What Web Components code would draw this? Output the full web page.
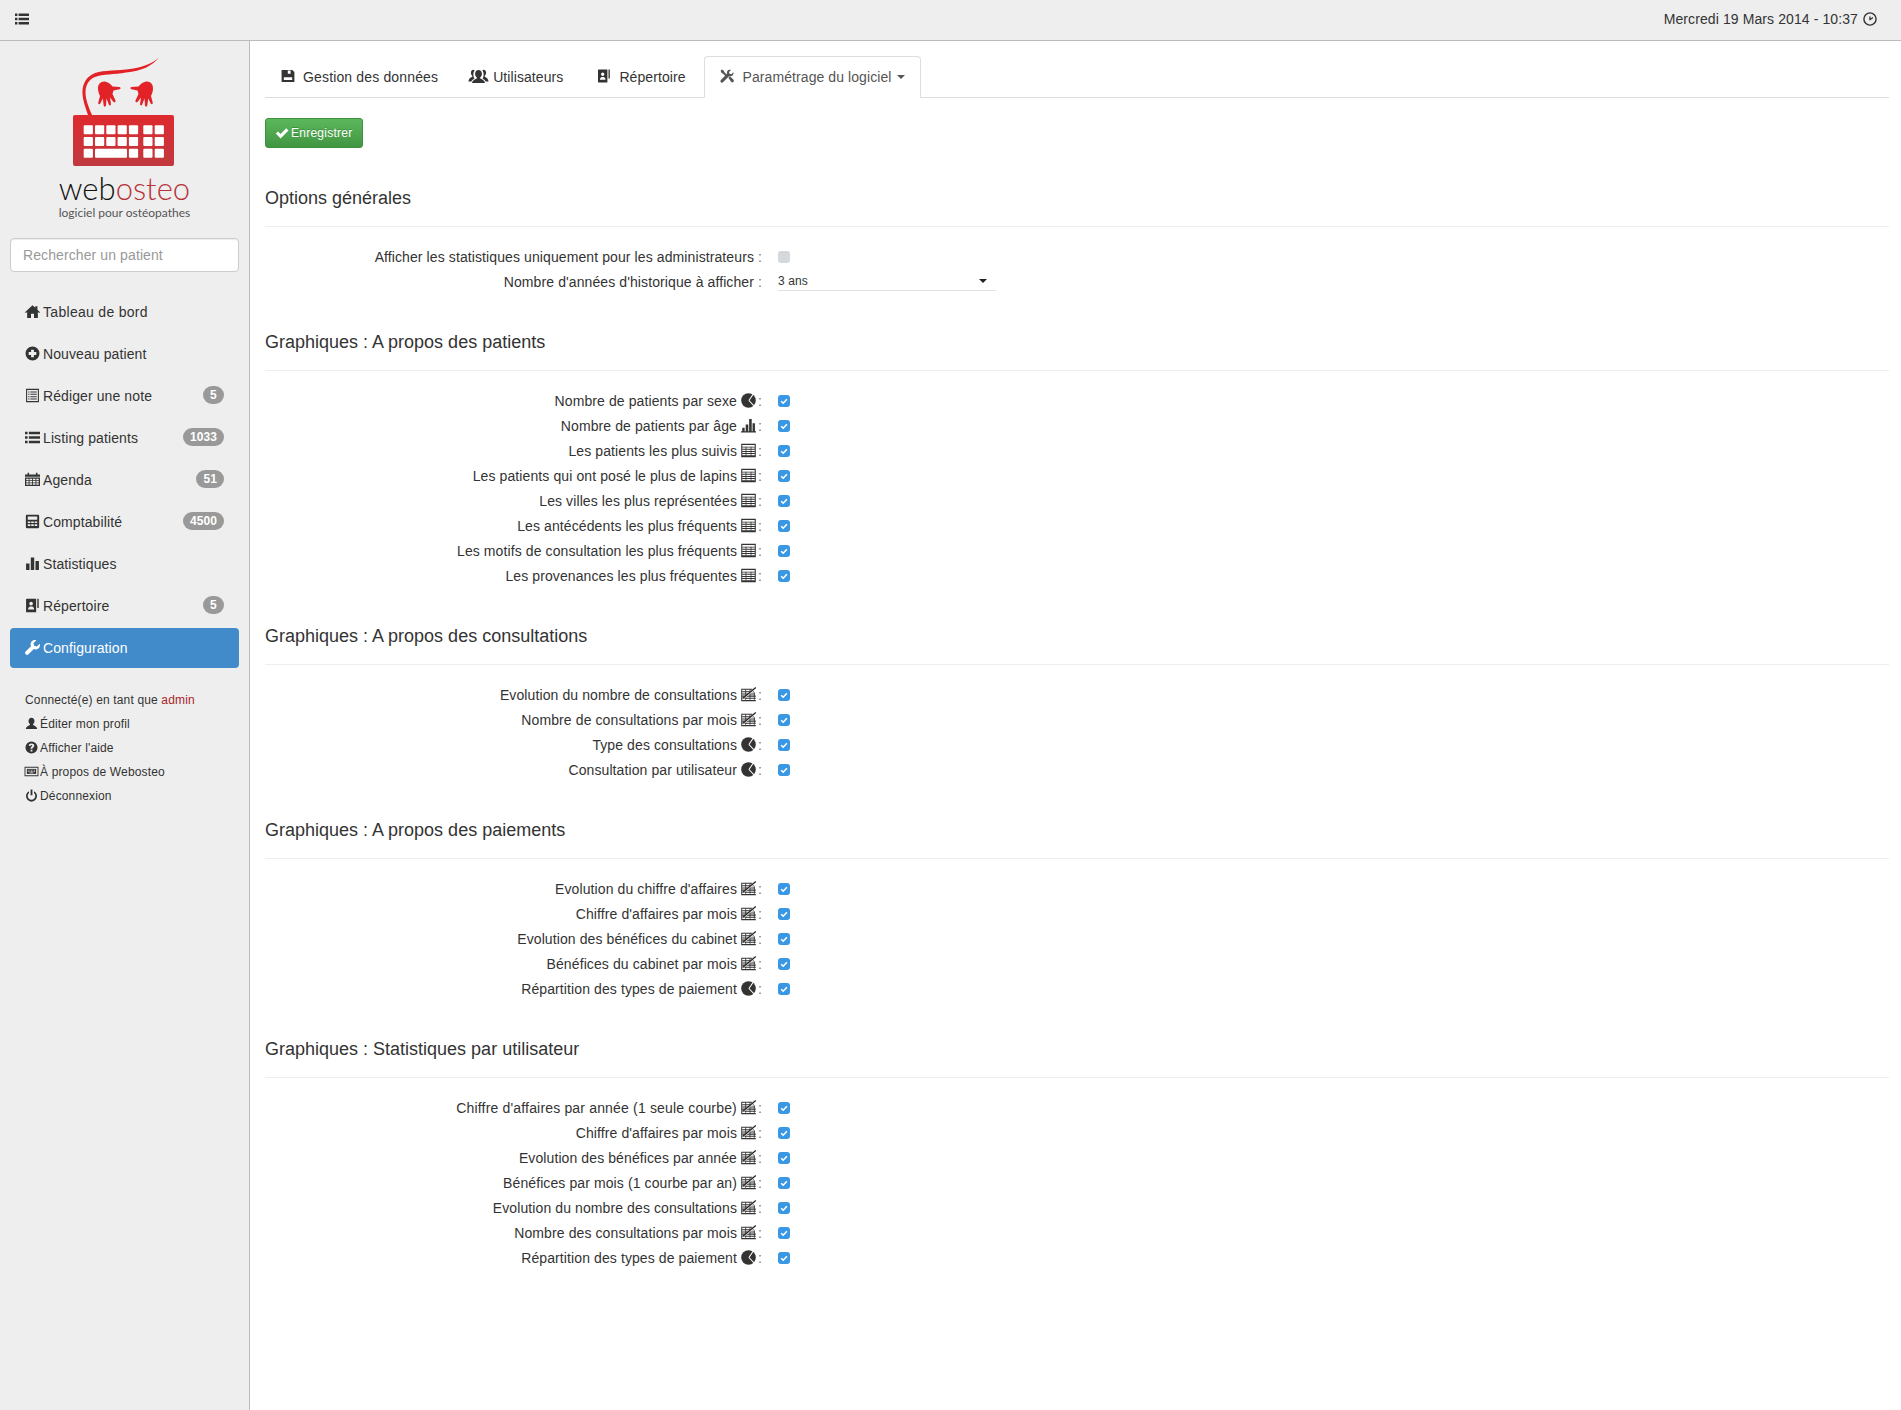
<!DOCTYPE html>
<html lang="fr">
<head>
<meta charset="utf-8">
<title>Webosteo - Configuration</title>
<style>
    html, body { margin: 0; padding: 0; height: 100%; background: #fff; }
    body { font-family: "Liberation Sans", Arial, sans-serif; font-size: 14px; color: #333; }
</style>
</head>
<body>

<wo-app>
    <wo-topbar slot="top">Mercredi 19 Mars 2014 - 10:37</wo-topbar>

    <wo-sidebar slot="side">
        <wo-nav-item icon="home" style="letter-spacing:.3px">Tableau de bord</wo-nav-item>
        <wo-nav-item icon="plus">Nouveau patient</wo-nav-item>
        <wo-nav-item icon="note" badge="5">Rédiger une note</wo-nav-item>
        <wo-nav-item icon="list" badge="1033">Listing patients</wo-nav-item>
        <wo-nav-item icon="calendar" badge="51">Agenda</wo-nav-item>
        <wo-nav-item icon="calc" badge="4500">Comptabilité</wo-nav-item>
        <wo-nav-item icon="stats">Statistiques</wo-nav-item>
        <wo-nav-item icon="book" badge="5">Répertoire</wo-nav-item>
        <wo-nav-item icon="wrench" active>Configuration</wo-nav-item>
        <wo-user-menu slot="user"></wo-user-menu>
    </wo-sidebar>

    <wo-tabs>
        <wo-tab icon="save" gap="8" style="letter-spacing:.15px">Gestion des données</wo-tab>
        <wo-tab icon="group" size="19" gap="5" pull="3">Utilisateurs</wo-tab>
        <wo-tab icon="book" gap="8">Répertoire</wo-tab>
        <wo-tab icon="tools" active caret>Paramétrage du logiciel</wo-tab>
    </wo-tabs>

    <wo-button icon="check">Enregistrer</wo-button>

    <wo-section heading="Options générales" first>
        <wo-option>Afficher les statistiques uniquement pour les administrateurs</wo-option>
        <wo-option select="3 ans">Nombre d'années d'historique à afficher</wo-option>
    </wo-section>

    <wo-section heading="Graphiques : A propos des patients">
        <wo-option icon="pie" checked>Nombre de patients par sexe</wo-option>
        <wo-option icon="bars" checked>Nombre de patients par âge</wo-option>
        <wo-option icon="table" checked>Les patients les plus suivis</wo-option>
        <wo-option icon="table" checked>Les patients qui ont posé le plus de lapins</wo-option>
        <wo-option icon="table" checked>Les villes les plus représentées</wo-option>
        <wo-option icon="table" checked>Les antécédents les plus fréquents</wo-option>
        <wo-option icon="table" checked>Les motifs de consultation les plus fréquents</wo-option>
        <wo-option icon="table" checked>Les provenances les plus fréquentes</wo-option>
    </wo-section>

    <wo-section heading="Graphiques : A propos des consultations">
        <wo-option icon="line" checked>Evolution du nombre de consultations</wo-option>
        <wo-option icon="line" checked>Nombre de consultations par mois</wo-option>
        <wo-option icon="pie" checked>Type des consultations</wo-option>
        <wo-option icon="pie" checked>Consultation par utilisateur</wo-option>
    </wo-section>

    <wo-section heading="Graphiques : A propos des paiements">
        <wo-option icon="line" checked>Evolution du chiffre d'affaires</wo-option>
        <wo-option icon="line" checked>Chiffre d'affaires par mois</wo-option>
        <wo-option icon="line" checked>Evolution des bénéfices du cabinet</wo-option>
        <wo-option icon="line" checked>Bénéfices du cabinet par mois</wo-option>
        <wo-option icon="pie" checked>Répartition des types de paiement</wo-option>
    </wo-section>

    <wo-section heading="Graphiques : Statistiques par utilisateur">
        <wo-option icon="line" checked style="letter-spacing:.17px">Chiffre d'affaires par année (1 seule courbe)</wo-option>
        <wo-option icon="line" checked>Chiffre d'affaires par mois</wo-option>
        <wo-option icon="line" checked>Evolution des bénéfices par année</wo-option>
        <wo-option icon="line" checked>Bénéfices par mois (1 courbe par an)</wo-option>
        <wo-option icon="line" checked>Evolution du nombre des consultations</wo-option>
        <wo-option icon="line" checked>Nombre des consultations par mois</wo-option>
        <wo-option icon="pie" checked>Répartition des types de paiement</wo-option>
    </wo-section>
</wo-app>

<script>
// Glyph set, all on a 14x14 grid
const ICONS = {
    home: '<path d="M7 1.2 0 7.6l.8.9L2 7.500V13h3.600V9h2.800v4H12V7.500l1.200 1 .8-.9L11.600 5.400V2h-2v1.600z"/>',
    plus: '<path fill-rule="evenodd" d="M7 .5a6.500 6.500 0 1 0 0 13 6.500 6.500 0 0 0 0-13zM5.700 3.400h2.600v2.300h2.300v2.600H8.300v2.300H5.700V8.300H3.400V5.700h2.300z"/>',
    note: '<path fill-rule="evenodd" d="M1 .8h12v12.400H1zM2 1.800v10.400h10V1.800z"/><path d="M3 3.200h1.200v1H3zM5 3.200h6v1H5zM3 5.400h1.200v1H3zM5 5.400h6v1H5zM3 7.600h1.200v1H3zM5 7.600h6v1H5zM3 9.800h1.200v1H3zM5 9.800h6v1H5z"/>',
    list: '<path d="M0 1.600h2.400V4H0zM3.600 1.600H14V4H3.600zM0 5.800h2.400v2.400H0zM3.600 5.800H14v2.400H3.600zM0 10h2.400v2.400H0zM3.600 10H14v2.400H3.600z"/>',
    calendar: '<path fill-rule="evenodd" d="M0 5.200h14V13H0zM1.200 6.300v1.300h2.200V6.300zm3 0v1.300h2.400V6.300zm3.200 0v1.300h2.400V6.300zm3.200 0v1.300h2.200V6.300zM1.200 8.400v1.300h2.200V8.400zm3 0v1.300h2.400V8.400zm3.200 0v1.300h2.400V8.400zm3.200 0v1.300h2.200V8.400zM1.200 10.500v1.400h2.200v-1.400zm3 0v1.400h2.400v-1.400zm3.200 0v1.400h2.400v-1.400zm3.200 0v1.400h2.200v-1.400z"/><path d="M0 2.400h2.400V.8h1.400v1.600h6.400V.8h1.400v1.600H14v2.100H0z"/>',
    calc: '<path fill-rule="evenodd" d="M1.600.8H12.400a.9.9 0 0 1 .8 1V12.200a.9.9 0 0 1-.8 1H1.600a.9.9 0 0 1-.8-1V1.800a.9.9 0 0 1 .8-1zM2.600 2.400v3h8.800v-3zM2.600 7v1.500h2.400V7zm3.200 0v1.500h2.400V7zm3.200 0v1.500h2.400V7zM2.600 9.600v1.600h2.400V9.600zm3.200 0v1.600h2.400V9.600zm3.200 0v1.600h2.400V9.600z"/>',
    stats: '<path d="M1 7h3.200v6H1zM5.400 1.400h3.200V13H5.400zM9.800 4.600H13V13H9.800z"/>',
    book: '<path fill-rule="evenodd" d="M1 1.200C1 .8 1.300.6 1.700.6h8.700V13.400H1.700C1.300 13.400 1 13.200 1 12.800zM5.700 3.600a1.700 1.700 0 1 0 0 3.400 1.700 1.700 0 0 0 0-3.400zM3 10.800h5.400V9.400L7 8H4.500L3 9.400z"/><path d="M11.500.6h1.300v8.800h-1.300z"/>',
    wrench: '<path d="M13.800 3.400 11 6.100 8.600 5.400 7.900 3l2.700-2.800C8.800-.4 6.900.3 6 1.600 5.100 2.900 5 4.500 5.600 5.800L.6 10.800c-.8.8-.8 1.800 0 2.600.8.8 1.800.8 2.600 0l5-5c1.300.6 2.900.5 4.200-.4 1.300-.9 2-2.800 1.400-4.600z"/>',
    user: '<path d="M7 .8c-2 0-3.200 1.400-3.200 3.400 0 1.500.7 2.800 1.500 3.400v1C4 9.400 1.400 10 .8 12.800h12.400c-.6-2.800-3.200-3.400-4.500-4.200v-1c.8-.6 1.500-1.900 1.500-3.400C10.200 2.200 9 .8 7 .8z"/>',
    help: '<path fill-rule="evenodd" d="M7 .5a6.500 6.500 0 1 0 0 13 6.500 6.500 0 0 0 0-13zM6 9.400h2v2H6zM7 2.600c1.700 0 3 .9 3 2.400 0 1-.5 1.500-1.200 2-.6.4-.8.7-.8 1.400H6c0-1.200.3-1.800 1.100-2.400.5-.4.8-.6.8-1 0-.4-.4-.7-.9-.7-.6 0-1 .3-1.100 1l-1.900-.3C4.200 3.500 5.300 2.600 7 2.600z"/>',
    keyboard: '<path fill-rule="evenodd" d="M-.5 2h15v10h-15zM.5 3v8h13V3z"/><path d="M2 4.200h10v5.400H2z"/><path fill="#eee" d="M3 5h1v.8H3zM4.800 5h1v.8h-1zM6.400 5h1v.8h-1zM8 5h1v.8H8zM9.800 5h1v.8h-1zM3 6.500h1v.8H3zM4.800 6.500h1v.8h-1zM6.400 6.500h1v.8h-1zM8 6.500h1v.8H8zM9.800 6.500h1v.8h-1zM4.800 8h4.200v.8H4.800z"/>',
    off: '<path d="M6 .6h2v6.200H6z"/><path d="M4.300 2.300v2.100a4.100 4.100 0 1 0 5.400 0V2.300a6 6 0 1 1-5.400 0z"/>',
    save: '<path fill-rule="evenodd" d="M.6 1H11.200L13.400 3V13H.6zM6.800 1.600V4.800H9.600V1.600zM2.800 8.200V11H11.200V8.200z"/>',
    group: '<path d="M7 2.200c-1.500 0-2.500 1.100-2.500 2.700 0 1.200.5 2.200 1.200 2.700v.8c-1 .6-3 1-3.500 3.300h9.600c-.5-2.300-2.500-2.700-3.500-3.300v-.8c.7-.5 1.200-1.500 1.200-2.700C9.500 3.300 8.500 2.200 7 2.200z"/><path d="M3.400 2C2.200 2 1.400 2.900 1.400 4.200c0 1 .4 1.800 1 2.200v.7C1.600 7.600 0 7.900-.4 10.600h2.200c.4-1 1.200-1.500 2.200-2-.5-.8-.8-2-.8-3.200 0-1 .3-2 .9-2.800C3.900 2.200 3.700 2 3.400 2zM10.600 2c1.200 0 2 .9 2 2.200 0 1-.4 1.800-1 2.200v.7c.8.5 2.400.8 2.800 3.500h-2.200c-.4-1-1.200-1.500-2.200-2 .5-.8.8-2 .8-3.200 0-1-.3-2-.9-2.800C10.100 2.200 10.300 2 10.600 2z"/>',
    tools: '<path d="M13.400 3.200 11.300 5.200 9.500 4.700 9 2.900 11 .9C9.600.4 8 .9 7.300 2c-.5.900-.5 1.900-.2 2.800L1 10.900c-.8.800-.8 1.600-.1 2.300s1.500.7 2.300-.1l6.100-6.100c.9.300 1.900.3 2.800-.2C13.200 6.100 13.800 4.600 13.400 3.200z"/><path d="M.6 1.800 1.800.6 3.900 1.800 4.200 3 7 5.800 5.600 7.200 2.800 4.400 1.600 4.100zM8.400 8.700 9.900 7.200 13.300 10.600c.7.700.7 1.600.1 2.300-.7.700-1.700.6-2.300-.1z"/>',
    check: '<path d="M.8 7.600 3 5.400 5.600 8 11.200 2.200 13.500 4.500 5.600 12.400z"/>',
    clock: '<path fill-rule="evenodd" d="M7 .2a6.800 6.800 0 1 0 0 13.600A6.800 6.800 0 0 0 7 .2zm0 1.400a5.400 5.400 0 1 1 0 10.800A5.400 5.400 0 0 1 7 1.600z"/><path d="M6.300 8V4.600h1.300v1.900l2-1.500.7 1L7 8.500z"/>',
    pie: '<circle cx="7" cy="7" r="6.800"/><path d="M7.400 7 11.800 .4M7.400 7 12.800 12.800" fill="none" stroke="#fff" stroke-width="1"/>',
    bars: '<path d="M0 12.400h14v1.100H0zM1.200 9.200h2.200v3.200H1.200zM4.400 6h2.400v6.400H4.400zM7.600 1h2.400v11.400H7.600zM10.800 5h2.200v7.400h-2.200z"/>',
    table: '<path fill-rule="evenodd" d="M.2 .8h13.600v12.400H.2zM1.200 1.800v10.400h11.600V1.800z"/><path d="M1 3.400h12v.9H1zM1 5.400h12v.9H1zM1 7.400h12v.9H1zM1 9.400h12v.9H1zM1 11.200h12v.6H1z"/><path d="M4.300 3.400h.7v8.600h-.7zM9 3.400h.7v8.600H9z"/>',
    line: '<path d="M.2 1.600h10.400v1H1.100v9.600h12.700v1H.2z"/><path d="M1 4h11v1H1zM1 6h12v1H1zM1 8h12.800v1H1zM1 10h12.800v1H1z"/><path d="M4 2h.8v10H4zM8 2h.8v10H8zM12 5h.8v7H12z"/><path d="M1.500 11.200 13.300 1.500" fill="none" stroke="#fff" stroke-width="1.500"/><path d="M1.500 10.700 13.800.4" fill="none" stroke="#222" stroke-width="1.200"/>'
};

class WoIcon extends HTMLElement {
    connectedCallback() {
        const size = this.getAttribute('size') || 14;
        const name = this.getAttribute('name');
        this.attachShadow({ mode: 'open' });
        this.shadowRoot.innerHTML = `
            <style>
                :host { display: inline-flex; flex: none; width: ${size}px; height: ${size}px; }
                svg { display: block; width: 100%; height: 100%; fill: currentColor; overflow: visible; }
            </style>
            <svg viewBox="0 0 14 14" aria-hidden="true">${ICONS[name] || ''}</svg>
        `;
    }
}

class WoApp extends HTMLElement {
    constructor() {
        super();
        this.attachShadow({ mode: 'open' }).innerHTML = `
            <style>
                :host { display: grid; grid-template-columns: 250px 1fr; grid-template-rows: 41px 1fr; min-height: 1410px; }
                ::slotted([slot="top"]) { grid-column: 1 / 3; }
                main { padding: 15px 12px 0 15px; min-width: 0; }
            </style>
            <slot name="top"></slot>
            <slot name="side"></slot>
            <main><slot></slot></main>
        `;
    }
}

class WoTopbar extends HTMLElement {
    constructor() {
        super();
        this.attachShadow({ mode: 'open' }).innerHTML = `
            <style>
                :host { display: flex; align-items: center; justify-content: space-between; box-sizing: border-box; height: 41px;
                        padding: 0 24px 2px 15px; background: #eee; border-bottom: 1px solid #bbb; font-size: 14px; letter-spacing: .1px; color: #333; }
                .clock { display: flex; align-items: center; gap: 5px; }
            </style>
            <wo-icon name="list"></wo-icon>
            <div class="clock"><span><slot></slot></span><wo-icon name="clock"></wo-icon></div>
        `;
    }
}

class WoLogo extends HTMLElement {
    constructor() {
        super();
        const keys = [];
        const cols = [83.7, 95, 106.3, 117.6, 128.9, 143.3, 154.7];
        [125.3, 137, 148.7].forEach((y, r) => {
            cols.forEach((x, c) => {
                if (r === 2 && c === 1) keys.push(`<rect x="${x}" y="${y}" width="32" height="9" rx="1"/>`);
                else if (r === 2 && (c === 2 || c === 3)) return;
                else keys.push(`<rect x="${x}" y="${y}" width="9.200" height="9" rx="1"/>`);
            });
        });
        this.attachShadow({ mode: 'open' }).innerHTML = `
            <style>
                :host { display: block; height: 197px; text-align: center; }
                svg { display: block; }
                .brand { margin-top: 3px; font: 300 31px/37px Lato, "Liberation Sans", sans-serif; color: #111; }
                .brand span { color: #b7333a; }
                .tag { font: 400 12px/12px Lato, "Liberation Sans", sans-serif; color: #555; }
            </style>
            <svg width="249" height="126" viewBox="0 41 249 126" aria-hidden="true">
                <defs><linearGradient id="kb" x1="0" y1="0" x2="0" y2="1"><stop offset="0" stop-color="#de2a2e"/><stop offset="1" stop-color="#c0393f"/></linearGradient></defs>
                <path fill="#e32228" d="M159 57.500C152 63.500 143 67.500 126 69.500 112 71 100 70 92 74.500 85 78.500 82 86 82.500 94c.3 6 3 14 5.500 21h4C88.500 107 85.500 99 85.500 92.500c0-7 3-13 9.500-15.500 8-3 19-2.500 31-4.500C142 71 152 66 159 57.500z"/>
                <g fill="#e32228">
                    <path id="hand" d="M98 89C97.500 84 101 81 105 81.500 108 82 110.500 84 112.500 86.500L119.500 87C121 87.300 121 89 119.500 89.200L113.500 90.500C113 92 112.800 93 112.500 94L115.500 100.500C116 102 114.300 103 113.300 101.700L110 97.500 111 104C111.200 105.500 109.300 106 108.800 104.600L106.500 98.500 106 105.500C105.900 107 104 107 103.700 105.500L102.800 98.500 100.300 103.500C99.500 104.800 97.800 104 98.300 102.500L100 96C98.800 93.500 98.200 91.500 98 89z"/>
                    <use href="#hand" transform="translate(251 0) scale(-1 1)"/>
                </g>
                <rect x="73" y="115" width="101" height="51" rx="2" fill="url(#kb)"/>
                <g fill="#fff">${keys.join('')}</g>
            </svg>
            <div class="brand">web<span>osteo</span></div>
            <div class="tag">logiciel pour ostéopathes</div>
        `;
    }
}

class WoSidebar extends HTMLElement {
    constructor() {
        super();
        this.attachShadow({ mode: 'open' }).innerHTML = `
            <style>
                :host { display: block; box-sizing: border-box; width: 250px; background: #eee; border-right: 1px solid #bbb; }
                .search { display: block; box-sizing: border-box; width: 229px; height: 34px; margin: 0 0 20px 10px; padding: 6px 12px;
                          border: 1px solid #ccc; border-radius: 4px; background: #fff; font: 14px "Liberation Sans", Arial, sans-serif; letter-spacing: .1px; color: #555;
                          box-shadow: inset 0 1px 1px rgba(0,0,0,.075); outline: 0; }
                .search::placeholder { color: #999; opacity: 1; }
                nav { display: flex; flex-direction: column; gap: 2px; padding: 0 10px; }
            </style>
            <wo-logo></wo-logo>
            <input class="search" type="text" placeholder="Rechercher un patient">
            <nav><slot></slot></nav>
            <slot name="user"></slot>
        `;
    }
}

class WoNavItem extends HTMLElement {
    connectedCallback() {
        const badge = this.getAttribute('badge');
        this.attachShadow({ mode: 'open' }).innerHTML = `
            <style>
                :host { display: flex; align-items: center; gap: 3px; box-sizing: border-box; height: 40px; padding: 0 15px; border-radius: 4px; color: #333; font-size: 14px; letter-spacing: .1px; }
                :host([active]) { background: #428bca; color: #fff; }
                wo-icon { margin-top: -2px; }
                .label { flex: 1; white-space: nowrap; }
                .badge { margin-top: -2px; padding: 3px 7px; min-width: 7px; border-radius: 10px; background: #999; color: #fff; font-size: 12px; font-weight: bold; line-height: 12px; letter-spacing: .1px; text-align: center; }
            </style>
            <wo-icon name="${this.getAttribute('icon')}" size="15"></wo-icon>
            <span class="label"><slot></slot></span>
            ${badge ? `<span class="badge">${badge}</span>` : ''}
        `;
    }
}

class WoUserMenu extends HTMLElement {
    constructor() {
        super();
        const links = [['user', 'Éditer mon profil'], ['help', 'Afficher l\'aide'], ['keyboard', 'À propos de Webosteo'], ['off', 'Déconnexion']];
        this.attachShadow({ mode: 'open' }).innerHTML = `
            <style>
                :host { display: block; padding: 20px 0 0 25px; font-size: 12px; line-height: 24px; letter-spacing: .15px; color: #333; }
                b { font-weight: normal; color: #a6252a; }
                div { display: flex; align-items: center; gap: 2px; height: 24px; white-space: nowrap; }
                wo-icon { margin-top: -2px; }
            </style>
            <div><span>Connecté(e) en tant que <b>admin</b></span></div>
            ${links.map(([icon, label]) => `<div><wo-icon name="${icon}" size="13"></wo-icon><span>${label}</span></div>`).join('')}
        `;
    }
}

class WoTabs extends HTMLElement {
    constructor() {
        super();
        this.attachShadow({ mode: 'open' }).innerHTML = `
            <style>
                :host { display: flex; gap: 2px; box-sizing: border-box; height: 42px; border-bottom: 1px solid #ddd; }
            </style>
            <slot></slot>
        `;
    }
}

class WoTab extends HTMLElement {
    connectedCallback() {
        const gap = this.getAttribute('gap') || 9;
        const size = this.getAttribute('size') || 14;
        const pull = this.getAttribute('pull') || 0;
        const caret = this.hasAttribute('caret') ? '<i></i>' : '';
        this.attachShadow({ mode: 'open' }).innerHTML = `
            <style>
                :host { display: flex; align-items: center; gap: ${gap}px; box-sizing: border-box; height: 42px; padding: 0 15px; color: #333; font-size: 14px; letter-spacing: .08px; white-space: nowrap; border: 1px solid transparent; border-radius: 4px 4px 0 0; }
                :host([active]) { color: #555; background: #fff; border-color: #ddd; border-bottom-color: #fff; }
                wo-icon { margin-left: -${pull}px; margin-top: -2px; }
                i { width: 0; height: 0; margin-left: -3px; border-top: 4px solid #555; border-left: 4px solid transparent; border-right: 4px solid transparent; }
            </style>
            <wo-icon name="${this.getAttribute('icon')}" size="${size}"></wo-icon>
            <slot></slot>${caret}
        `;
    }
}

class WoButton extends HTMLElement {
    connectedCallback() {
        this.attachShadow({ mode: 'open' }).innerHTML = `
            <style>
                :host { display: flex; align-items: center; width: max-content; gap: 2px; box-sizing: border-box; height: 30px; margin-top: 20px; padding: 0 10px 0 9px; border: 1px solid #3e8f3e; border-radius: 3px;
                        background: linear-gradient(#5cb85c, #419641); color: #fff; font-size: 12px; letter-spacing: .25px; text-shadow: 0 -1px 0 rgba(0,0,0,.2); }
            </style>
            <wo-icon name="${this.getAttribute('icon')}"></wo-icon>
            <slot></slot>
        `;
    }
}

class WoSection extends HTMLElement {
    connectedCallback() {
        this.attachShadow({ mode: 'open' }).innerHTML = `
            <style>
                :host { display: block; padding-bottom: 38px; }
                :host([first]) { margin-top: 40px; }
                h4 { margin: 0 0 18px; font-size: 18px; line-height: 20px; font-weight: normal; color: #333; }
                hr { margin: 0 0 17px; border: 0; border-top: 1px solid #eee; }
            </style>
            <h4>${this.getAttribute('heading')}</h4>
            <hr>
            <slot></slot>
        `;
    }
}

class WoOption extends HTMLElement {
    connectedCallback() {
        const icon = this.getAttribute('icon');
        const select = this.getAttribute('select');
        const checkbox = `<span class="box ${this.hasAttribute('checked') ? 'on' : ''}">
                <svg viewBox="0 0 12 12" aria-hidden="true"><path d="M3.200 6.200 5.200 8.200 8.900 4.200" fill="none" stroke="#fff" stroke-width="1.600"/></svg>
            </span>`;
        this.attachShadow({ mode: 'open' }).innerHTML = `
            <style>
                :host { display: grid; grid-template-columns: 497px 1fr; column-gap: 16px; align-items: center; height: 25px; font-size: 14px; letter-spacing: .1px; color: #333; }
                .label { display: flex; justify-content: flex-end; align-items: center; white-space: nowrap; }
                wo-icon { margin-left: 4px; }
                .colon { color: #777; margin-left: ${icon ? 2 : 4}px; }
                .box { display: block; width: 12px; height: 12px; border-radius: 3px; background: #d6d9dc; }
                .box svg { display: none; width: 12px; height: 12px; }
                .box.on { background: #3a97e4; }
                .box.on svg { display: block; }
                .select { display: flex; align-items: center; justify-content: space-between; align-self: start; box-sizing: border-box; width: 218px; height: 22px; padding: 2px 9px 0 0; border-bottom: 1px solid #e2e2e2; font-size: 12px; }
                .select i { width: 0; height: 0; border-top: 4px solid #222; border-left: 4px solid transparent; border-right: 4px solid transparent; }
            </style>
            <div class="label"><span><slot></slot></span>${icon ? `<wo-icon name="${icon}" size="15"></wo-icon>` : ''}<span class="colon">:</span></div>
            ${select ? `<div class="select"><span>${select}</span><i></i></div>` : checkbox}
        `;
    }
}

customElements.define('wo-icon', WoIcon);
customElements.define('wo-logo', WoLogo);
customElements.define('wo-app', WoApp);
customElements.define('wo-topbar', WoTopbar);
customElements.define('wo-sidebar', WoSidebar);
customElements.define('wo-nav-item', WoNavItem);
customElements.define('wo-user-menu', WoUserMenu);
customElements.define('wo-tabs', WoTabs);
customElements.define('wo-tab', WoTab);
customElements.define('wo-button', WoButton);
customElements.define('wo-section', WoSection);
customElements.define('wo-option', WoOption);
</script>
</body>
</html>
